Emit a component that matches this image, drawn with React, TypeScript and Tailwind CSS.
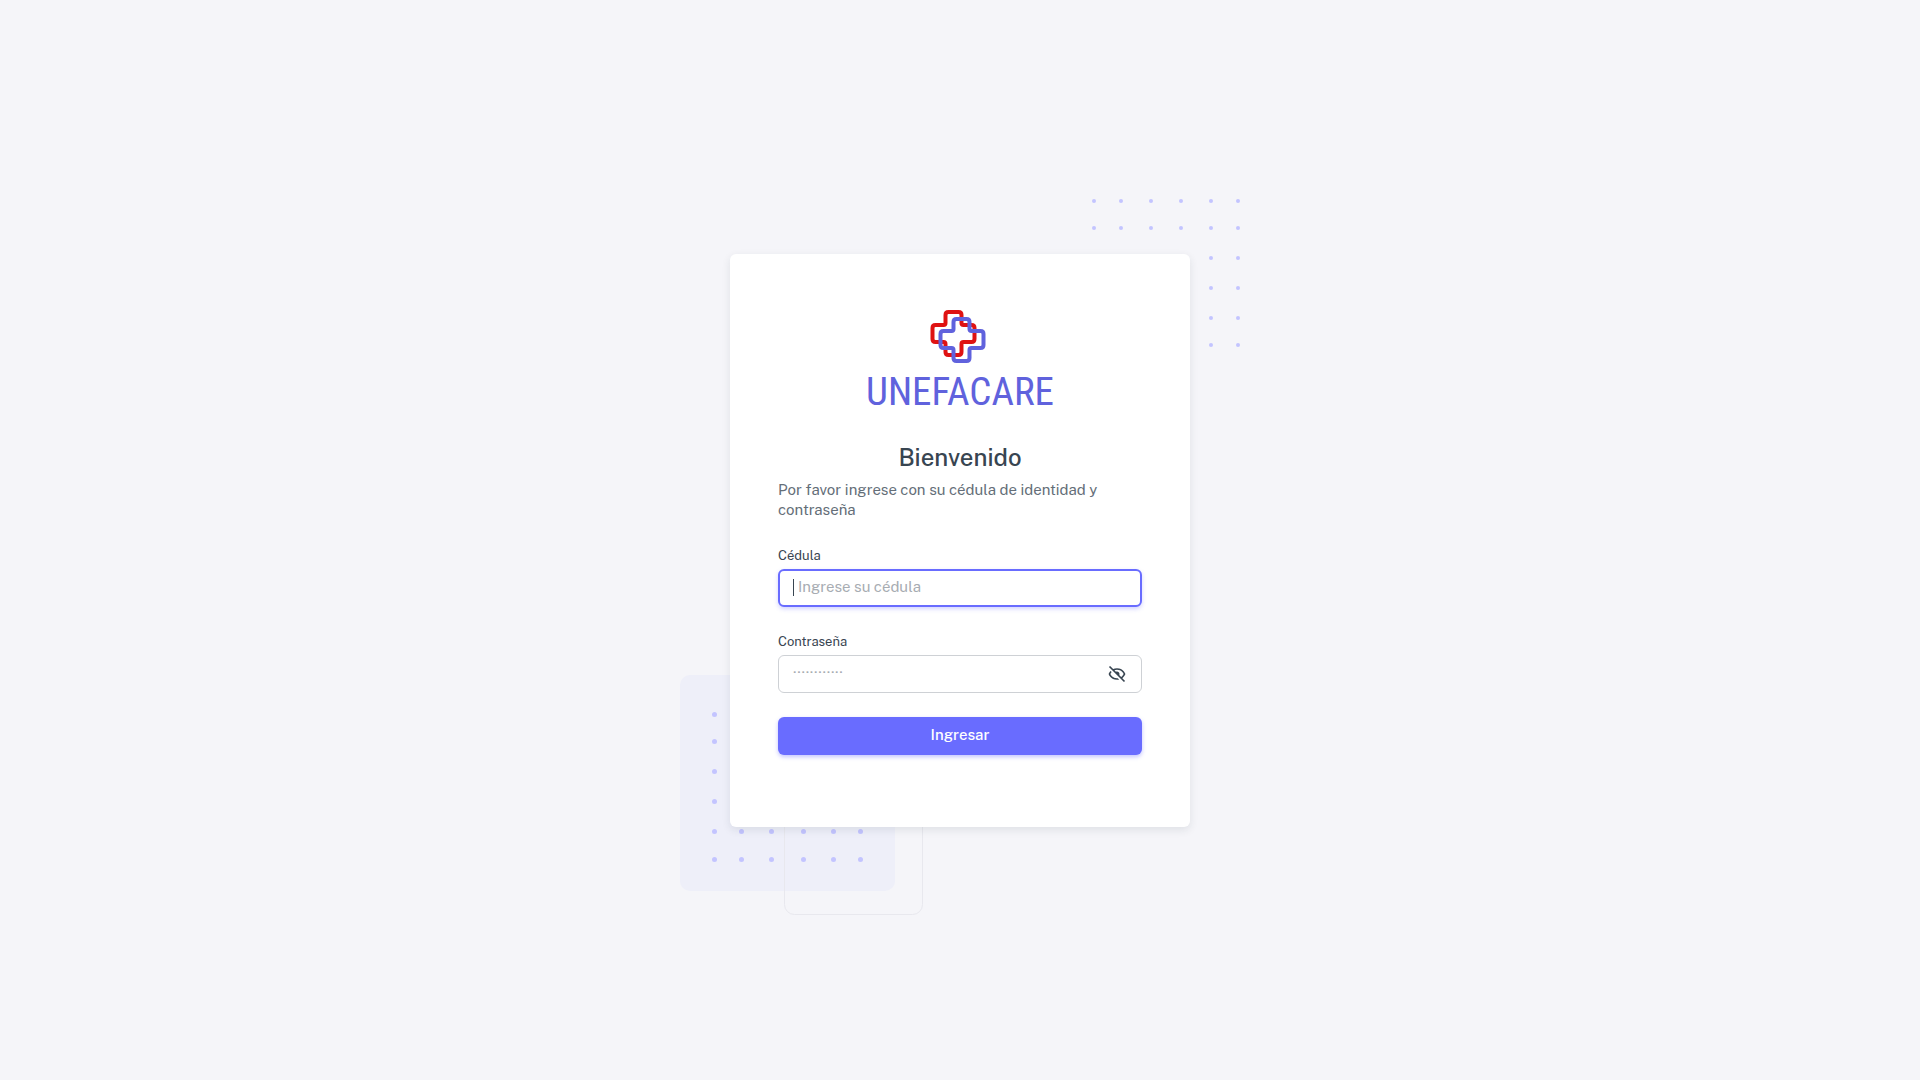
import type { ReactNode } from 'react';
import { BiHide } from 'react-icons/bi';

const TOP_X = [2, 29, 59, 89, 119, 146];
const TOP_Y = [2, 29, 59, 89, 119, 146];
const BOTTOM_X = [34.5, 61.5, 91.5, 123.5, 153.5, 180.5];
const BOTTOM_Y = [39.5, 66.5, 96.5, 126.5, 156.5, 184.5];

function Dots({ xs, ys, r }: { xs: number[]; ys: number[]; r: number }) {
  return (
    <g fill="#c3c4ff">
      {ys.map((y) => xs.map((x) => <circle key={`${x}-${y}`} cx={x} cy={y} r={r} />))}
    </g>
  );
}

function Logo() {
  return (
    <div className="flex flex-col items-center">
      <svg width="58" height="56" viewBox="0.5 0 58 56" fill="none" strokeWidth="4" strokeLinejoin="round" className="overflow-visible" aria-hidden="true">
        <path
          stroke="#df1212"
          d="M18 3H28Q31 3 31 6V14Q31 16 33 16H41Q44 16 44 19V30Q44 33 41 33H33Q31 33 31 35V43Q31 46 28 46H18Q15 46 15 43V35Q15 33 13 33H5Q2 33 2 30V19Q2 16 5 16H13Q15 16 15 14V6Q15 3 18 3Z"
        />
        <path
          stroke="#6062dd"
          d="M26 10H36Q39 10 39 13V20Q39 22 41 22H50Q53 22 53 25V36Q53 39 50 39H41Q39 39 39 41V49Q39 52 36 52H26Q23 52 23 49V41Q23 39 21 39H13Q10 39 10 36V25Q10 22 13 22H21Q23 22 23 20V13Q23 10 26 10Z"
        />
      </svg>
      <span className="mt-[5px] font-['Roboto_Condensed','Roboto',sans-serif] text-[39px] leading-[44px] text-[#6062dd]">
        UNEFACARE
      </span>
    </div>
  );
}

function Field({ id, label, children }: { id: string; label: string; children: ReactNode }) {
  return (
    <div className="mb-6">
      <label htmlFor={id} className="mb-0.5 block text-[13px] leading-[22px] text-[#384551]">
        {label}
      </label>
      <div className="relative">{children}</div>
    </div>
  );
}

export default function App() {
  return (
    <main className="flex min-h-screen items-center justify-center bg-[#f5f5f9] font-['Public_Sans','Inter',sans-serif]">
      <div className="relative w-full max-w-[460px]">
        <svg className="absolute -top-[55px] -right-[50px]" width="148" height="148" aria-hidden="true">
          <Dots xs={TOP_X} ys={TOP_Y} r={2} />
        </svg>
        <svg className="absolute -bottom-[89px] -left-[50px]" width="244" height="241" aria-hidden="true">
          <rect width="215" height="216" rx="10" fill="#eeeff9" />
          <rect x="104.5" y="100.5" width="138" height="139" rx="10" fill="none" stroke="#e8e8ee" />
          <Dots xs={BOTTOM_X} ys={BOTTOM_Y} r={2.5} />
        </svg>

        <section className="relative rounded-md bg-white px-12 pt-[55px] pb-12 shadow-[0_3px_8px_rgba(34,48,62,0.1)]">
          <Logo />
          <h1 className="mt-[25px] mb-[5px] text-center text-2xl leading-9 font-medium text-[#384551]">Bienvenido</h1>
          <p className="mb-[25px] text-[15px] leading-5 text-[#646e78]">
            Por favor ingrese con su cédula de identidad y contraseña
          </p>
          <form onSubmit={(e) => e.preventDefault()}>
            <Field id="cedula" label="Cédula">
              <input
                id="cedula"
                type="text"
                placeholder="Ingrese su cédula"
                className="block h-[38px] w-full rounded-md border-2 border-[#696cff] bg-white pr-4 pb-[3px] pl-[18px] text-[15px] text-[#384551] shadow-[0_2px_4px_rgba(105,108,255,0.3)] outline-none placeholder:text-[#a7acb2]"
              />
              <span className="absolute top-[10px] left-[15px] h-[17px] w-px bg-[#384551]" aria-hidden="true" />
            </Field>
            <Field id="password" label="Contraseña">
              <input
                id="password"
                type="password"
                placeholder="············"
                className="block h-[38px] w-full rounded-md border border-[#ced1d5] bg-white pr-12 pb-[3px] pl-3.5 text-[15px] text-[#384551] outline-none placeholder:text-[#a7acb2]"
              />
              <button
                type="button"
                aria-label="Mostrar contraseña"
                className="absolute inset-y-0 right-[15px] flex items-center text-[#384551]"
              >
                <BiHide size={20} />
              </button>
            </Field>
            <button
              type="submit"
              className="mb-6 block h-[38px] w-full rounded-md bg-[#696cff] pb-px text-[15px] font-medium text-white shadow-[0_2px_4px_rgba(105,108,255,0.4)]"
            >
              Ingresar
            </button>
          </form>
        </section>
      </div>
    </main>
  );
}
